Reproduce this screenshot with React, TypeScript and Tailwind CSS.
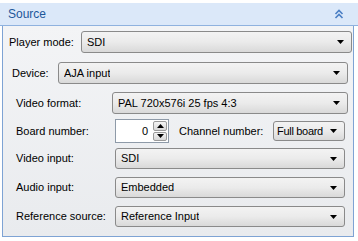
import React from 'react';

const font = { fontFamily: '"Liberation Sans", Arial, sans-serif' };

function Arrow() {
  return (
    <svg width="7" height="4" viewBox="0 0 7 4" className="shrink-0">
      <path d="M0 0h7L3.5 4z" fill="#000" />
    </svg>
  );
}

function Select({ value, className }: { value: string; className: string }) {
  return (
    <div
      className={`flex items-center justify-between rounded-[3px] border border-[#8a8a8a] bg-gradient-to-b from-[#f3f3f3] via-[#ebebeb] to-[#d9d9d9] pr-[7px] text-[11px] text-black ${className}`}
    >
      <span className="truncate">{value}</span>
      <Arrow />
    </div>
  );
}

function Spinner() {
  return (
    <div className="flex h-[24px] w-[54px] border border-[#8e9aa8] bg-white">
      <div className="flex flex-1 items-center justify-end pr-[4px] text-[11px]">0</div>
      <div className="flex w-[16px] flex-col gap-px p-px">
        <div className="flex flex-1 items-center justify-center rounded-[2px] border border-[#9a9a9a] bg-gradient-to-b from-[#f4f4f4] to-[#d8d8d8]">
          <svg width="7" height="4" viewBox="0 0 7 4">
            <path d="M0 4h7L3.5 0z" fill="#000" />
          </svg>
        </div>
        <div className="flex flex-1 items-center justify-center rounded-[2px] border border-[#9a9a9a] bg-gradient-to-b from-[#f4f4f4] to-[#d8d8d8]">
          <Arrow />
        </div>
      </div>
    </div>
  );
}

function Row({ label, labelW, children }: { label: string; labelW: string; children: React.ReactNode }) {
  return (
    <div className="flex items-center">
      <span className={`shrink-0 text-[11px] text-black ${labelW}`}>{label}</span>
      {children}
    </div>
  );
}

export default function App() {
  return (
    <div className="h-[241px] w-[358px] bg-white pt-[3px]" style={font}>
      <div className="flex h-[23px] items-center justify-between border-b border-[#8fb2df] bg-[#dbe8f9] pl-[8px] pr-[14px]">
        <span className="text-[12px] text-[#1e5799]">Source</span>
        <svg width="10" height="10" viewBox="0 0 10 10" fill="none" stroke="#4b7fc4" strokeWidth="1.6">
          <path d="M1.5 5L5 1.5L8.5 5" />
          <path d="M1.5 9L5 5.5L8.5 9" />
        </svg>
      </div>
      <div className="ml-[2px] mr-[4px] h-[211px] border border-t-0 border-[#7ea3d4] bg-gradient-to-b from-[#f3f4f6] to-[#e9ebee] pl-[6px] pr-[1px] pt-[5px]">
        <Row label="Player mode:" labelW="w-[72px]">
          <Select value="SDI" className="h-[22px] flex-1 pl-[5px]" />
        </Row>
        <div className="mt-[9px] pl-[3px] pr-[4px]">
          <Row label="Device:" labelW="w-[46px]">
            <Select value="AJA input" className="h-[22px] flex-1 pl-[5px]" />
          </Row>
          <div className="mt-[8px] flex flex-col pl-[4px]">
            <Row label="Video format:" labelW="w-[96px]">
              <Select value="PAL 720x576i 25 fps 4:3" className="h-[22px] flex-1 pl-[5px]" />
            </Row>
            <div className="mt-[5px] flex items-center pr-[3px]">
              <span className="w-[99px] shrink-0 text-[11px]">Board number:</span>
              <Spinner />
              <span className="ml-[10px] w-[94px] shrink-0 text-[11px]">Channel number:</span>
              <Select value="Full board" className="h-[20px] flex-1 pl-[3px] tracking-[-0.3px]" />
            </div>
            <div className="mt-[5px] flex flex-col gap-[8px] pr-[3px]">
              <Row label="Video input:" labelW="w-[99px]">
                <Select value="SDI" className="h-[21px] flex-1 pl-[5px]" />
              </Row>
              <Row label="Audio input:" labelW="w-[99px]">
                <Select value="Embedded" className="h-[21px] flex-1 pl-[5px]" />
              </Row>
              <Row label="Reference source:" labelW="w-[99px]">
                <Select value="Reference Input" className="h-[21px] flex-1 pl-[5px]" />
              </Row>
            </div>
          </div>
        </div>
      </div>
    </div>
  );
}
